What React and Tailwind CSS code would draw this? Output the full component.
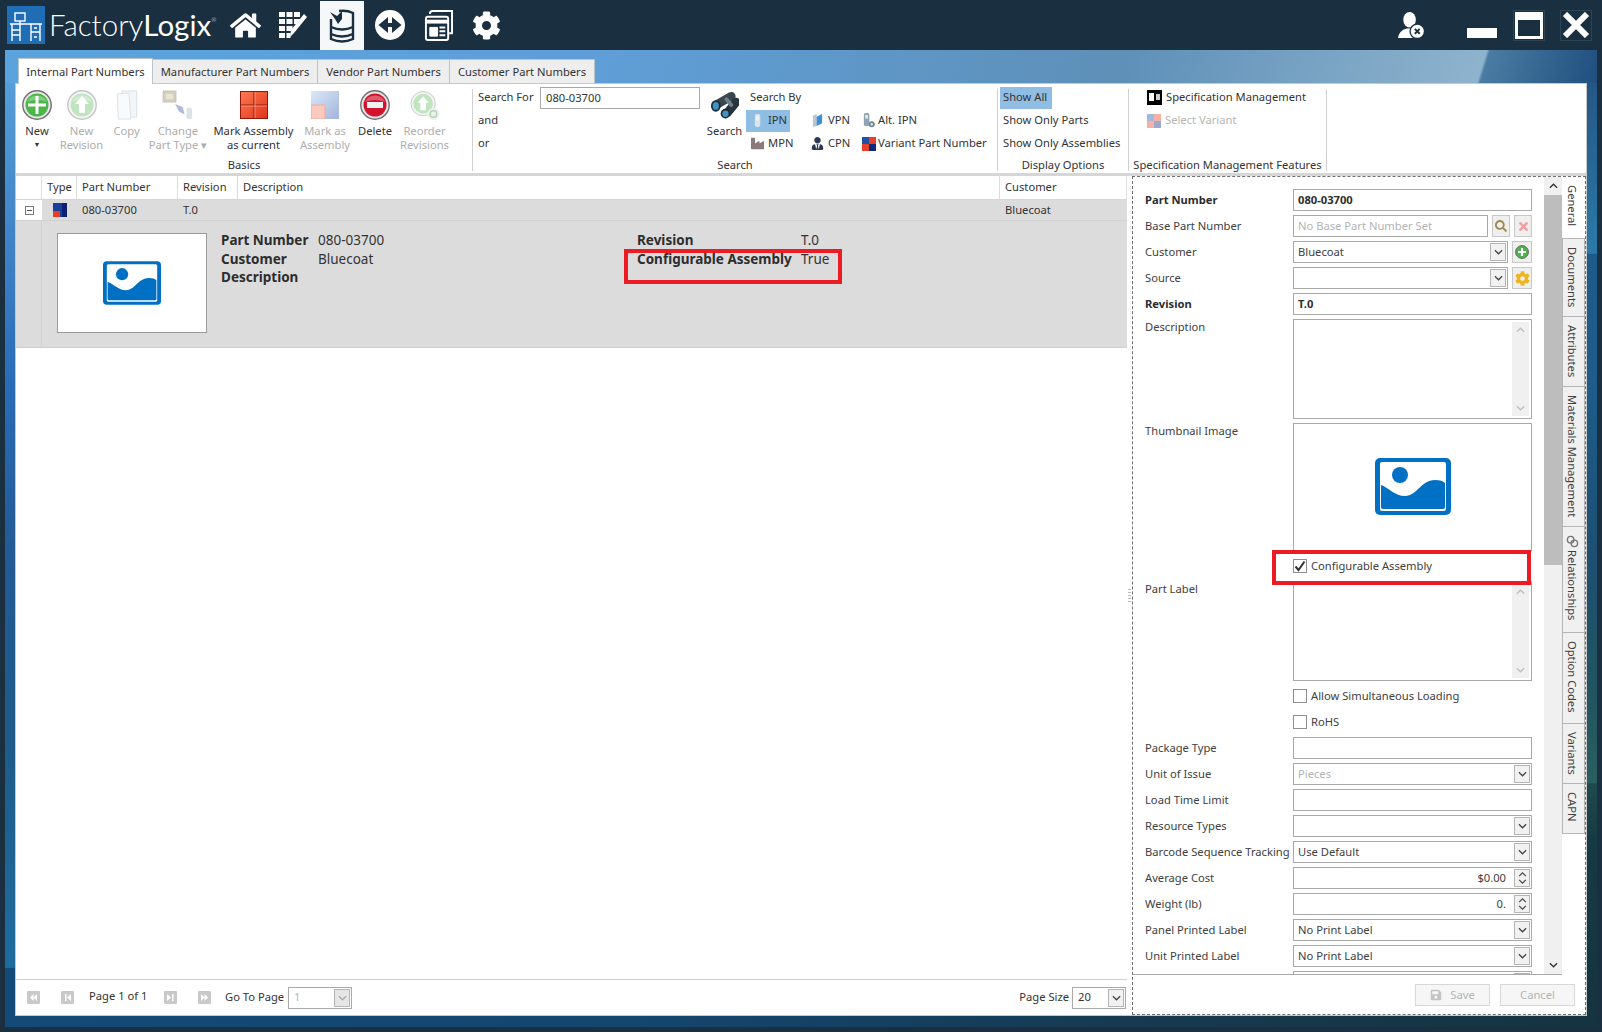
import { FaHome, FaCog, FaIndustry, FaUserTie, FaSearch, FaTimes, FaSave } from 'react-icons/fa';

function Chevron({ up, className = 'w-[9px] h-[6px]', color = '#444' }) {
  return (
    <svg viewBox="0 0 10 6" className={className} fill="none" stroke={color} strokeWidth="1.4">
      <polyline points={up ? '1,5 5,1 9,5' : '1,1 5,5 9,1'} />
    </svg>
  );
}

function PictureIcon({ className }) {
  return (
    <svg viewBox="0 0 76 57" className={className}>
      <rect width="76" height="57" rx="5" fill="#0070c4" />
      <rect x="5" y="4" width="66" height="49" rx="2" fill="#fff" />
      <circle cx="25" cy="17" r="8" fill="#0070c4" />
      <path d="M6 27 C14 30 20 38 30 38 C42 38 46 22 60 22 C65 22 68 23 70 25 L70 49 Q70 51 68 51 L8 51 Q6 51 6 49 Z" fill="#0070c4" />
    </svg>
  );
}

function RoundIcon({ fill, ring = '#6f6f6f', faded, children }) {
  return (
    <svg viewBox="0 0 30 30" className={`w-[30px] h-[30px] ${faded ? 'opacity-40' : ''}`}>
      <circle cx="15" cy="15" r="14.2" fill="#e8e8e8" stroke={ring} strokeWidth="1.4" />
      <circle cx="15" cy="15" r="11.5" fill={fill} />
      <path d="M5 12 A11 11 0 0 1 25 12 Q15 8 5 12Z" fill="#fff" opacity="0.3" />
      {children}
    </svg>
  );
}

const ArrowUp = <path d="M15 6 L22 14 L18 14 L18 23 L12 23 L12 14 L8 14 Z" fill="#fff" />;

function CopyIcon() {
  return (
    <svg viewBox="0 0 24 32" className="w-[24px] h-[31px] opacity-50">
      <rect x="7" y="1" width="15" height="27" fill="#e3eef5" stroke="#b8c6cf" />
      <path d="M2 4 L14 3 L16 30 L3 30 Z" fill="#f2f7fa" stroke="#b8c6cf" />
    </svg>
  );
}

function ChangeTypeIcon() {
  return (
    <svg viewBox="0 0 34 34" className="w-[32px] h-[32px] opacity-60">
      <rect x="1" y="2" width="14" height="12" fill="#b5ae8c" stroke="#8f8a70" strokeDasharray="1 1" />
      <rect x="4" y="5" width="8" height="6" fill="#d8d3b6" />
      <path d="M14 16 L22 19 L24 27 L18 24 Z" fill="#7d8fc4" />
      <rect x="26" y="20" width="6" height="12" rx="2" fill="#c6d2d8" />
    </svg>
  );
}

function MarkAssemblyIcon() {
  return (
    <svg viewBox="0 0 28 28" className="w-[28px] h-[28px]">
      <defs>
        <linearGradient id="mk" x1="0" y1="0" x2="1" y2="1">
          <stop offset="0" stopColor="#ff7a50" />
          <stop offset="1" stopColor="#e0341c" />
        </linearGradient>
      </defs>
      <rect x="0.5" y="0.5" width="27" height="27" fill="url(#mk)" stroke="#8f1a0c" />
      <path d="M14 1 V27 M1 14 H27" stroke="#8f1a0c" strokeWidth="1" />
      <path d="M1 15 H27 M15 1 V27" stroke="#ffb8a0" strokeWidth="0.6" />
    </svg>
  );
}

function MarkAsIcon() {
  return (
    <svg viewBox="0 0 28 28" className="w-[28px] h-[28px]">
      <defs>
        <linearGradient id="ma" x1="0" y1="0" x2="1" y2="1">
          <stop offset="0" stopColor="#d9e9f7" />
          <stop offset="1" stopColor="#a4b3dc" />
        </linearGradient>
      </defs>
      <rect width="28" height="28" fill="url(#ma)" />
      <rect x="0" y="14" width="14" height="14" fill="#fbc9bd" stroke="#f2a897" />
    </svg>
  );
}

function ReorderIcon() {
  return (
    <svg viewBox="0 0 32 32" className="w-[30px] h-[31px] opacity-40">
      <circle cx="14" cy="14" r="13" fill="#e8e8e8" stroke="#777" />
      <circle cx="14" cy="14" r="10.5" fill="#5fbf5f" />
      <path d="M14 6 L20 13 L17 13 L17 21 L11 21 L11 13 L8 13 Z" fill="#fff" />
      <circle cx="25" cy="25" r="6.5" fill="#d5d5d5" />
      <circle cx="25" cy="25" r="3.5" fill="none" stroke="#3fa04f" strokeWidth="1.6" />
    </svg>
  );
}

function VariantIcon({ faded }) {
  return (
    <svg viewBox="0 0 14 14" className={`w-[14px] h-[14px] ${faded ? 'opacity-40' : ''}`}>
      <rect width="7" height="7" fill="#1f50a8" />
      <rect x="7" width="7" height="7" fill="#e8402a" />
      <rect y="7" width="7" height="7" fill="#e8402a" />
      <rect x="7" y="7" width="7" height="7" fill="#0b2a80" />
    </svg>
  );
}

function PhoneIcon({ tint = '#aebcc6' }) {
  return (
    <svg viewBox="0 0 12 16" className="w-[11px] h-[15px]">
      <rect x="3" y="1" width="6" height="14" rx="2" fill={tint} />
      <rect x="4.5" y="3" width="3" height="5" fill="#eef3f6" />
    </svg>
  );
}

function VpnIcon() {
  return (
    <svg viewBox="0 0 14 16" className="w-[13px] h-[15px]">
      <path d="M2 3 L6 1 V14 L2 15 Z" fill="#b7c6d0" />
      <path d="M6 4 L12 1 V11 L6 14 Z" fill="#3f8fd0" />
    </svg>
  );
}

function AltIpnIcon() {
  return (
    <svg viewBox="0 0 14 16" className="w-[13px] h-[15px]">
      <rect x="2" y="0" width="6" height="14" rx="2" fill="#8fa3b3" />
      <rect x="3.5" y="2" width="3" height="4" fill="#dfe8ee" />
      <circle cx="10.5" cy="12" r="3.2" fill="#6f8597" />
      <circle cx="10.5" cy="12" r="1.3" fill="#dfe8ee" />
    </svg>
  );
}

function Binoculars() {
  return (
    <svg viewBox="0 0 30 28" className="w-[29px] h-[28px]">
      <g fill="none" strokeLinecap="round">
        <path d="M22 5 L8 13" stroke="#3a4650" strokeWidth="9" />
        <path d="M27 11 L18 22" stroke="#2a343c" strokeWidth="9" />
        <path d="M17 8 L22 14" stroke="#70808a" strokeWidth="4" />
      </g>
      <ellipse cx="6" cy="15" rx="5" ry="6" fill="#1b2a33" />
      <ellipse cx="6" cy="15" rx="3.2" ry="4" fill="#3f93c4" />
      <ellipse cx="16" cy="23" rx="5" ry="5" fill="#1b2a33" />
      <ellipse cx="16" cy="23" rx="3.2" ry="3.4" fill="#3f93c4" />
    </svg>
  );
}

const basics = [
  { w: 'w-[42px]', icon: <RoundIcon fill="#4cb648"><path d="M15 6 V24 M6 15 H24" stroke="#fff" strokeWidth="3" /></RoundIcon>, lines: ['New'], caret: true },
  { w: 'w-[47px]', icon: <RoundIcon fill="#5fbf5f" faded>{ArrowUp}</RoundIcon>, lines: ['New', 'Revision'], off: true },
  { w: 'w-[43px]', icon: <CopyIcon />, lines: ['Copy'], off: true },
  { w: 'w-[60px]', icon: <ChangeTypeIcon />, lines: ['Change', 'Part Type ▾'], off: true },
  { w: 'w-[91px]', icon: <MarkAssemblyIcon />, lines: ['Mark Assembly', 'as current'] },
  { w: 'w-[52px]', icon: <MarkAsIcon />, lines: ['Mark as', 'Assembly'], off: true },
  { w: 'w-[48px]', icon: <RoundIcon fill="#d3122e"><rect x="7" y="12" width="16" height="6" fill="#f1f1f1" /></RoundIcon>, lines: ['Delete'] },
  { w: 'w-[51px]', icon: <ReorderIcon />, lines: ['Reorder', 'Revisions'], off: true },
];

function RibbonButton({ w, icon, lines, off, caret }) {
  return (
    <div className={`${w} shrink-0 -mt-[1px] flex flex-col items-center ${off ? 'text-[#adadad]' : 'text-[#333]'}`}>
      <div className="h-[34px] flex items-center justify-center">{icon}</div>
      <div className="mt-[2px] text-center leading-[14px] whitespace-nowrap">
        {lines.map((l) => <div key={l}>{l}</div>)}
        {caret && <div className="text-[7px] leading-[14px]">▼</div>}
      </div>
    </div>
  );
}

function RibbonGroup({ w, label, children }) {
  return (
    <div className={`${w} shrink-0 h-[82px] flex flex-col border-r border-[#d0d0d0]`}>
      <div className="flex-1 flex min-h-0">{children}</div>
      <div className="h-[14px] leading-[14px] -mb-[1px] text-center whitespace-nowrap text-[#333]">{label}</div>
    </div>
  );
}

function TextRow({ children, className = '' }) {
  return <div className={`h-[23px] flex items-center whitespace-nowrap ${className}`}>{children}</div>;
}

function SearchOpt({ icon, text, active, iconW = 'w-[19px]' }) {
  return (
    <TextRow>
      <div className={`h-[22px] flex items-center ${active ? 'bg-[#8fbde4] pr-[3px]' : ''}`}>
        <span className={`${iconW} flex justify-center shrink-0`}>{icon}</span>
        <span>{text}</span>
      </div>
    </TextRow>
  );
}

function Ribbon() {
  return (
    <div className="h-[92px] shrink-0 pt-[5px] flex border-b-[3px] border-[#d6d6d6]">
      <RibbonGroup w="w-[457px]" label="Basics">
        {basics.map((b, i) => <RibbonButton key={i} {...b} />)}
      </RibbonGroup>
      <RibbonGroup w="w-[525px]" label="Search">
        <div className="pl-[5px] w-[67px] shrink-0 -mt-[3px] text-[#333]">
          <TextRow>Search For</TextRow>
          <TextRow>and</TextRow>
          <TextRow>or</TextRow>
        </div>
        <div className="w-[160px] h-[22px] -mt-[2px] shrink-0 border border-[#a9a9a9] pl-[5px] flex items-center text-[#333]">080-03700</div>
        <div className="w-[46px] shrink-0 -mt-[1px] pl-[3px] flex flex-col items-center text-[#333]">
          <div className="h-[34px] flex items-center justify-center">
            <Binoculars />
          </div>
          <div className="mt-[2px] leading-[14px]">Search</div>
        </div>
        <div className="-mt-[3px] w-[61px] shrink-0 text-[#333]">
          <TextRow className="pl-[4px]">Search By</TextRow>
          <SearchOpt active iconW="w-[22px]" icon={<PhoneIcon tint="#d9e4ea" />} text="IPN" />
          <SearchOpt iconW="w-[22px]" icon={<FaIndustry className="w-[13px] h-[13px] text-[#8a7a7a]" />} text="MPN" />
        </div>
        <div className="-mt-[3px] pt-[23px] w-[52px] shrink-0 text-[#333]">
          <SearchOpt iconW="w-[21px]" icon={<VpnIcon />} text="VPN" />
          <SearchOpt iconW="w-[21px]" icon={<FaUserTie className="w-[13px] h-[13px] text-[#2a3a55]" />} text="CPN" />
        </div>
        <div className="-mt-[3px] pt-[23px] text-[#333]">
          <SearchOpt icon={<AltIpnIcon />} text="Alt. IPN" />
          <SearchOpt icon={<VariantIcon />} text="Variant Part Number" />
        </div>
      </RibbonGroup>
      <RibbonGroup w="w-[131px]" label="Display Options">
        <div className="pl-[2px] -mt-[3px] text-[#333]">
          <TextRow><span className="h-[22px] w-[52px] flex items-center pl-[3px] bg-[#8fbde4]">Show All</span></TextRow>
          <TextRow className="pl-[3px]">Show Only Parts</TextRow>
          <TextRow className="pl-[3px]">Show Only Assemblies</TextRow>
        </div>
      </RibbonGroup>
      <RibbonGroup w="w-[198px]" label="Specification Management Features">
        <div className="pl-[18px] -mt-[3px]">
          <TextRow className="text-[#333]">
            <svg viewBox="0 0 15 15" className="w-[15px] h-[15px] mr-[4px]">
              <rect width="15" height="15" fill="#000" />
              <rect x="2" y="3" width="5" height="8" fill="#fff" />
              <rect x="9" y="4" width="4" height="6" fill="#ccc" />
            </svg>
            Specification Management
          </TextRow>
          <TextRow className="text-[#b5b5b5]">
            <span className="mr-[4px]"><VariantIcon faded /></span>
            Select Variant
          </TextRow>
        </div>
      </RibbonGroup>
    </div>
  );
}

function PagerBtn({ d, className = '' }) {
  return (
    <svg viewBox="0 0 13 13" className={`w-[13px] h-[13px] shrink-0 ${className}`}>
      <rect width="13" height="13" rx="1" fill="#c9c9c9" />
      <path d={d} fill="#fff" />
    </svg>
  );
}

function MiniSelect({ w, value, off }) {
  return (
    <div className={`${w} h-[22px] shrink-0 border border-[#a9a9a9] flex items-center justify-between pl-[5px] pr-[1px] ${off ? 'text-[#b5b5b5]' : 'text-[#333]'}`}>
      {value}
      <span className={`w-[16px] h-[18px] flex items-center justify-center border border-[#b5b5b5] ${off ? 'bg-[#e6e6e6]' : 'bg-[#f1f1f1]'}`}>
        <Chevron color={off ? '#aaa' : '#444'} />
      </span>
    </div>
  );
}

function GridPane() {
  return (
    <div className="w-[1111px] shrink-0 flex flex-col text-[#333]">
      <div className="h-[24px] shrink-0 flex border-b border-[#d6d6d6] [&>div]:border-r [&>div]:border-[#dcdcdc] [&>div]:flex [&>div]:items-center [&>div]:pl-[5px]">
        <div className="w-[26px]" />
        <div className="w-[35px]">Type</div>
        <div className="w-[101px]">Part Number</div>
        <div className="w-[60px]">Revision</div>
        <div className="w-[762px]">Description</div>
        <div className="flex-1">Customer</div>
      </div>
      <div className="h-[21px] shrink-0 flex bg-[#dcdcdc] border-b border-[#d2d2d2]">
        <div className="w-[26px] bg-white flex items-center justify-center">
          <span className="w-[9px] h-[9px] border border-[#777] flex items-center justify-center">
            <span className="w-[5px] h-px bg-[#555]" />
          </span>
        </div>
        <div className="w-[35px] flex items-center justify-center">
          <svg viewBox="0 0 14 14" className="w-[14px] h-[14px]">
            <rect width="14" height="14" fill="#1a3f9c" />
            <rect x="9" width="5" height="14" fill="#0c2170" />
            <rect y="8" width="7" height="6" fill="#e8401f" />
          </svg>
        </div>
        <div className="w-[101px] flex items-center pl-[5px]">080-03700</div>
        <div className="w-[60px] flex items-center pl-[5px]">T.0</div>
        <div className="w-[762px]" />
        <div className="flex-1 flex items-center pl-[5px]">Bluecoat</div>
      </div>
      <div className="relative h-[127px] shrink-0 flex bg-[#dcdcdc] border-b border-[#d0d0d0] text-[13.5px]">
        <div className="w-[26px] shrink-0 border-r border-[#d2d2d2]" />
        <div className="ml-[15px] mt-[12px] w-[150px] h-[100px] shrink-0 bg-white border border-[#9a9a9a] flex items-center justify-center">
          <PictureIcon className="w-[58px] h-[44px]" />
        </div>
        <div className="ml-[14px] mt-[10px] w-[97px] shrink-0 font-bold leading-[19px] text-[#2d2d2d]">
          <div>Part Number</div>
          <div>Customer</div>
          <div className="-mt-px">Description</div>
        </div>
        <div className="mt-[10px] w-[319px] shrink-0 leading-[19px]">
          <div>080-03700</div>
          <div>Bluecoat</div>
        </div>
        <div className="mt-[10px] w-[164px] shrink-0 font-bold leading-[19px] text-[#2d2d2d] whitespace-nowrap">
          <div>Revision</div>
          <div>Configurable Assembly</div>
        </div>
        <div className="mt-[10px] leading-[19px]">
          <div>T.0</div>
          <div>True</div>
        </div>
        <div className="absolute left-[608px] top-[28px] w-[218px] h-[35px] border-4 border-[#ed1c24]" />
      </div>
      <div className="flex-1" />
      <div className="h-[36px] shrink-0 border-t border-[#d0d0d0] flex items-center pl-[11px] pr-[1px]">
        <PagerBtn d="M3 6.5 L6.5 3 V10 Z M6.5 6.5 L10 3 V10 Z" />
        <PagerBtn className="ml-[21px]" d="M4 3 H5.5 V10 H4 Z M10 3 V10 L6 6.5 Z" />
        <span className="ml-[15px] w-[75px] -mt-[3px] whitespace-nowrap">Page 1 of 1</span>
        <PagerBtn d="M3 3 L7 6.5 L3 10 Z M8 3 H9.5 V10 H8 Z" />
        <PagerBtn className="ml-[21px]" d="M3 3 L6.5 6.5 L3 10 Z M6.5 3 L10 6.5 L6.5 10 Z" />
        <span className="ml-[14px] w-[63px] whitespace-nowrap">Go To Page</span>
        <MiniSelect w="w-[64px]" value="1" off />
        <span className="ml-auto mr-[3px] whitespace-nowrap">Page Size</span>
        <MiniSelect w="w-[54px]" value="20" />
      </div>
    </div>
  );
}

function Row({ label, bold, top, children }) {
  return (
    <div className="flex shrink-0">
      <div className={`w-[148px] shrink-0 whitespace-nowrap leading-[18px] ${top ? '-mt-px' : 'self-center'} ${bold ? 'font-bold text-[#2d2d2d]' : ''}`}>{label}</div>
      <div className="w-[239px] shrink-0 flex gap-[4px]">{children}</div>
    </div>
  );
}

function Box({ children, bold, off }) {
  return (
    <div className={`h-[22px] min-w-0 flex-1 border border-[#a9a9a9] flex items-center px-[4px] ${bold ? 'font-bold text-[#2d2d2d]' : ''} ${off ? 'text-[#b3b3b3]' : ''}`}>
      {children}
    </div>
  );
}

function Select({ value, off }) {
  return (
    <div className={`h-[22px] flex-1 min-w-0 border border-[#a9a9a9] flex items-center pl-[4px] pr-[1px] ${off ? 'text-[#b3b3b3]' : ''}`}>
      {value}
      <span className="ml-auto w-[16px] h-[18px] shrink-0 flex items-center justify-center bg-[#f1f1f1] border border-[#b5b5b5]"><Chevron /></span>
    </div>
  );
}

function Spin({ value }) {
  return (
    <div className="h-[22px] flex-1 border border-[#a9a9a9] flex items-center justify-end pr-[1px]">
      {value}
      <span className="ml-[8px] w-[16px] h-[18px] shrink-0 flex flex-col items-center justify-center gap-[2px] bg-[#f1f1f1] border border-[#b5b5b5]">
        <Chevron up className="w-[9px] h-[5px]" />
        <Chevron className="w-[9px] h-[5px]" />
      </span>
    </div>
  );
}

function SquareBtn({ w = 'w-[20px]', children }) {
  return <div className={`${w} h-[22px] shrink-0 flex items-center justify-center bg-[#efefef] border border-[#c8c8c8]`}>{children}</div>;
}

function MemoBox({ h }) {
  return (
    <div className={`${h} flex-1 border border-[#a9a9a9] flex justify-end p-[2px]`}>
      <div className="w-[17px] h-full bg-[#f0f0f0] flex flex-col items-center justify-between py-[5px]">
        <Chevron up color="#bcbcbc" />
        <Chevron color="#bcbcbc" />
      </div>
    </div>
  );
}

function Check({ label, checked }) {
  return (
    <div className="flex items-center h-[22px] whitespace-nowrap">
      <span className="w-[14px] h-[14px] border border-[#8f8f8f] mr-[4px] flex items-center justify-center">
        {checked && (
          <svg viewBox="0 0 12 12" className="w-[12px] h-[12px]" fill="none" stroke="#333" strokeWidth="2"><polyline points="1.5,6.5 4.5,10 10.5,1.5" /></svg>
        )}
      </span>
      {label}
    </div>
  );
}

function FormPane() {
  return (
    <div className="relative w-[411px] shrink-0 h-full overflow-hidden pl-[12px] pt-[12px] flex flex-col gap-[4px] text-[#404040]">
      <Row label="Part Number" bold><Box bold>080-03700</Box></Row>
      <Row label="Base Part Number">
        <Box off>No Base Part Number Set</Box>
        <SquareBtn w="w-[18px]"><FaSearch className="w-[12px] h-[12px] text-[#9a8b52]" /></SquareBtn>
        <SquareBtn w="w-[18px]"><FaTimes className="w-[13px] h-[13px] text-[#f0a0a0]" /></SquareBtn>
      </Row>
      <Row label="Customer">
        <Select value="Bluecoat" />
        <SquareBtn>
          <svg viewBox="0 0 14 14" className="w-[14px] h-[14px]">
            <circle cx="7" cy="7" r="6.4" fill="#4cb648" stroke="#666" />
            <path d="M7 3 V11 M3 7 H11" stroke="#fff" strokeWidth="2" />
          </svg>
        </SquareBtn>
      </Row>
      <Row label="Source">
        <Select value="" />
        <SquareBtn><FaCog className="w-[15px] h-[15px] text-[#eeb51e]" /></SquareBtn>
      </Row>
      <Row label="Revision" bold><Box bold>T.0</Box></Row>
      <Row label="Description" top><MemoBox h="h-[100px]" /></Row>
      <Row label="Thumbnail Image" top>
        <div className="h-[128px] flex-1 border border-[#a9a9a9] flex justify-center pt-[34px]">
          <PictureIcon className="w-[76px] h-[57px]" />
        </div>
      </Row>
      <Row label=""><Check label="Configurable Assembly" checked /></Row>
      <Row label="Part Label" top><MemoBox h="h-[100px]" /></Row>
      <Row label=""><Check label="Allow Simultaneous Loading" /></Row>
      <Row label=""><Check label="RoHS" /></Row>
      <Row label="Package Type"><Box /></Row>
      <Row label="Unit of Issue"><Select value="Pieces" off /></Row>
      <Row label="Load Time Limit"><Box /></Row>
      <Row label="Resource Types"><Select value="" /></Row>
      <Row label="Barcode Sequence Tracking"><Select value="Use Default" /></Row>
      <Row label="Average Cost"><Spin value="$0.00" /></Row>
      <Row label="Weight (lb)"><Spin value="0." /></Row>
      <Row label="Panel Printed Label"><Select value="No Print Label" /></Row>
      <Row label="Unit Printed Label"><Select value="No Print Label" /></Row>
      <Row label=""><Select value="" /></Row>
      <div className="absolute left-[139px] top-[373px] w-[259px] h-[35px] border-4 border-[#ed1c24]" />
    </div>
  );
}

const sideTabs = [
  { label: 'General', h: 'h-[62px]', active: true },
  { label: 'Documents', h: 'h-[78px]' },
  { label: 'Attributes', h: 'h-[70px]' },
  { label: 'Materials Management', h: 'h-[140px]' },
  { label: 'Relationships', h: 'h-[106px]', link: true },
  { label: 'Option Codes', h: 'h-[91px]' },
  { label: 'Variants', h: 'h-[60px]' },
  { label: 'CAPN', h: 'h-[50px]' },
];

function DetailPane() {
  return (
    <div className="flex-1 min-w-0 flex flex-col border border-dashed border-[#6e6e6e]">
      <div className="h-[798px] shrink-0 flex">
        <div className="flex h-full border-b border-[#a9a9a9]">
          <FormPane />
          <div className="w-[18px] shrink-0 flex flex-col bg-[#f0f0f0]">
            <div className="h-[18px] flex items-center justify-center"><Chevron up color="#333" /></div>
            <div className="h-[370px] bg-[#bdbdbd]" />
            <div className="flex-1" />
            <div className="h-[18px] flex items-center justify-center"><Chevron color="#333" /></div>
          </div>
        </div>
        <div className="flex-1 flex flex-col">
          {sideTabs.map((t) => (
            <div key={t.label} className={`${t.h} shrink-0 flex justify-center pt-[8px] pr-[3px] border-b border-[#b5b5b5] ${t.active ? 'bg-white' : 'bg-[#f0f0f0] border-l border-r'} `}>
              <span className="[writing-mode:vertical-rl] whitespace-nowrap text-[#404040] flex items-center gap-[2px]">
                {t.link && (
                  <svg viewBox="0 0 14 14" className="w-[13px] h-[13px]" fill="none" stroke="#777" strokeWidth="1.5">
                    <circle cx="5" cy="5" r="3.5" /><circle cx="9" cy="9" r="3.5" />
                  </svg>
                )}
                {t.label}
              </span>
            </div>
          ))}
        </div>
      </div>
      <div className="flex-1 flex items-center justify-end pt-[1px] pr-[10px] gap-[10px] text-[#b3b3b3]">
        <div className="w-[75px] h-[22px] border border-[#d8d8d8] bg-[#f6f6f6] flex items-center justify-center gap-[8px]">
          <FaSave className="w-[12px] h-[12px] text-[#c4c4c4]" />Save
        </div>
        <div className="w-[75px] h-[22px] border border-[#d8d8d8] bg-[#f6f6f6] flex items-center justify-center">Cancel</div>
      </div>
    </div>
  );
}

function TopBar() {
  return (
    <div className="h-[50px] shrink-0 flex items-center text-white">
      <div className="ml-[7px] w-[38px] h-[38px] bg-[#1f6db5] flex items-center justify-center">
        <svg viewBox="0 0 34 34" className="w-[34px] h-[34px]" fill="none" stroke="#fff" strokeWidth="1.4">
          <rect x="6" y="5" width="10" height="8" />
          <path d="M11 13 V16 M1 16 H33 M3 16 V33 M3 22 H11 M3 27 H11 M11 16 V33 M22 16 V33 M31 16 V33 M22 24 H31 M25 20 H28 M25 29 H28" />
        </svg>
      </div>
      <div className="ml-[4px] w-[172px] text-[29.5px] leading-none whitespace-nowrap [font-family:'Lato',sans-serif] font-light">
        Factory<span className="font-normal">Logix</span><sup className="text-[6px] align-super">®</sup>
      </div>
      <div className="w-[48px] flex justify-center"><FaHome className="w-[31px] h-[31px]" /></div>
      <div className="w-[48px] flex justify-center">
        <svg viewBox="0 0 30 30" className="w-[30px] h-[30px]">
          <g fill="#fff">
            <rect x="1" y="2" width="6" height="5" /><rect x="8.5" y="2" width="6" height="5" /><rect x="16" y="2" width="6" height="5" />
            <rect x="1" y="9" width="6" height="5" /><rect x="8.5" y="9" width="6" height="5" /><rect x="16" y="9" width="6" height="5" />
            <rect x="1" y="16" width="6" height="5" /><rect x="8.5" y="16" width="6" height="5" />
            <rect x="1" y="23" width="6" height="5" /><rect x="8.5" y="23" width="4" height="5" />
            <path d="M26 4 L29 7 L16 23 L12 27 L13 20 Z" />
          </g>
        </svg>
      </div>
      <div className="w-[50px] flex justify-center self-end">
        <div className="w-[44px] h-[49px] bg-[#f6f7f9] flex items-center justify-center">
          <svg viewBox="0 0 26 34" className="w-[26px] h-[34px]" fill="none" stroke="#1a3041" strokeWidth="2.4">
            <path d="M2 10 V30 Q13 35 24 30 V4 Q18 1 10 2" />
            <path d="M2 18 Q13 23 24 18 M2 25 Q13 30 24 25" />
            <path d="M1 3 L8 7 L13 2 L13 10 L9 15 L6 10 Z" fill="#1a3041" stroke="none" />
          </svg>
        </div>
      </div>
      <div className="w-[46px] flex justify-center">
        <svg viewBox="0 0 30 30" className="w-[30px] h-[30px]">
          <circle cx="15" cy="15" r="15" fill="#fff" />
          <path d="M13 7 V13 H17 V7 L26.5 15 L17 23 V17 H13 V23 L3.5 15 Z" fill="#1a3041" />
        </svg>
      </div>
      <div className="w-[50px] flex justify-center">
        <svg viewBox="0 0 30 32" className="w-[29px] h-[31px]" fill="none" stroke="#fff">
          <path d="M6 4 Q6 1 9 1 H29 V24 H26" strokeWidth="2" />
          <rect x="2" y="7" width="23" height="24" rx="2" strokeWidth="2" />
          <path d="M2 12 H25" strokeWidth="4" />
          <path d="M6 18 H14 V27 H6 Z" fill="#fff" />
          <path d="M16 18 H22 M16 22 H22 M16 26 H22" strokeWidth="2" />
        </svg>
      </div>
      <div className="w-[46px] flex justify-center"><FaCog className="w-[29px] h-[29px]" /></div>
      <div className="flex-1" />
      <svg viewBox="0 0 28 28" className="w-[27px] h-[27px] mr-[42px]">
        <ellipse cx="12" cy="8" rx="6.5" ry="8" fill="#fff" />
        <path d="M0 27 Q1 19 9 17 H15 Q19 18 19 27 Z" fill="#fff" />
        <circle cx="20" cy="20" r="7.5" fill="#fff" stroke="#1a3041" strokeWidth="1.4" />
        <path d="M17.5 17.5 L22.5 22.5 M22.5 17.5 L17.5 22.5" stroke="#1a3041" strokeWidth="2" />
      </svg>
      <div className="w-[30px] h-[10px] bg-white mt-[16px]" />
      <div className="ml-[16px] w-[32px] h-[31px] border border-[#2d4455] flex items-center justify-center">
        <div className="w-[28px] h-[27px] border-[3px] border-t-[8px] border-white" />
      </div>
      <div className="ml-[15px] mr-[10px] w-[32px] h-[31px] border border-[#2d4455] flex items-center justify-center">
        <svg viewBox="0 0 28 26" className="w-[28px] h-[26px]" stroke="#fff" strokeWidth="6"><path d="M3 2 L25 24 M25 2 L3 24" /></svg>
      </div>
    </div>
  );
}

function Tabs() {
  const tabs = [
    { label: 'Internal Part Numbers', w: 'w-[135px]', active: true },
    { label: 'Manufacturer Part Numbers', w: 'w-[165px]' },
    { label: 'Vendor Part Numbers', w: 'w-[132px]' },
    { label: 'Customer Part Numbers', w: 'w-[145px]' },
  ];
  return (
    <div className="ml-[3px] h-[25px] shrink-0 flex items-end relative z-10">
      {tabs.map((t) => (
        <div key={t.label} className={`${t.w} pt-px flex items-center justify-center whitespace-nowrap border-t border-r border-[#b9c4cd] text-[#333] ${t.active ? 'h-[26px] -mb-px bg-white border-l' : 'h-[24px] bg-[#eeeeee]'}`}>
          {t.label}
        </div>
      ))}
    </div>
  );
}

export default function App() {
  return (
    <div className="w-[1602px] h-[1032px] overflow-hidden bg-[#1a3041] flex flex-col text-[11.2px] [font-family:'Noto_Sans',sans-serif]">
      <TopBar />
      <div className="flex-1 min-h-0 mx-[5px] mb-[5px] pt-[8px] pb-[11px] px-[10px] flex flex-col [background:linear-gradient(107deg,#5aa3dc_0%,#5f9fd9_35%,#5e90b8_70%,#8eb3cd_92.5%,#4a7ca3_92.7%,#1f4f7e_100%)_top/100%_33px_no-repeat,linear-gradient(90deg,#134a78_0%,#14466e_40%,#163a52_70%,#14343f_100%)_bottom/100%_11px_no-repeat,linear-gradient(180deg,#5aa3dc_0%,#2a6cb8_34%,#245a96_51%,#1f5a88_70%,#1e6a9a_90%,#1e6c9c_93.9%,#134a78_94%,#134a78_100%)_left/50%_100%_no-repeat,linear-gradient(180deg,#24507e_0%,#2a7aa8_20.8%,#1e5a88_20.9%,#1e5c8a_34%,#1d4f72_52%,#22555f_66%,#2a5f60_75%,#1f4a4c_75.1%,#163a44_81%,#14343f_100%)_right/50%_100%_no-repeat]">
        <Tabs />
        <div className="relative flex-1 min-h-0 bg-white border border-[#c8c8c8] flex flex-col">
          <Ribbon />
          <div className="flex-1 min-h-0 flex">
            <GridPane />
            <div className="w-[5px] shrink-0 flex items-center justify-center">
              <div className="w-[3px] h-[13px] bg-[repeating-linear-gradient(180deg,#bbb_0,#bbb_1px,transparent_1px,transparent_3px)]" />
            </div>
            <DetailPane />
          </div>
        </div>
      </div>
    </div>
  );
}
